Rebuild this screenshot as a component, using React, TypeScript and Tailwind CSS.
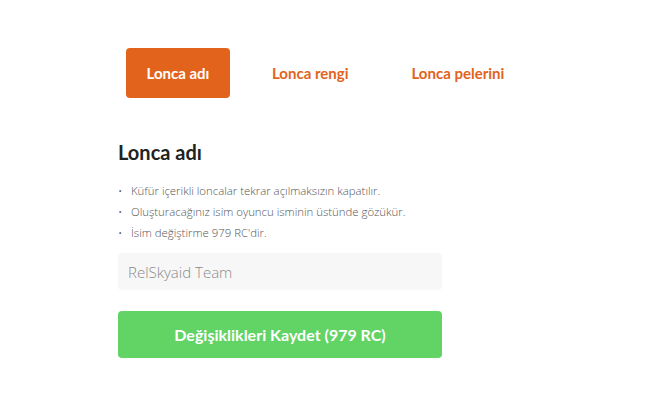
import React from "react";

export default function App() {
  const bullets = [
    "Küfür içerikli loncalar tekrar açılmaksızın kapatılır.",
    "Oluşturacağınız isim oyuncu isminin üstünde gözükür.",
    "İsim değiştirme 979 RC'dir.",
  ];
  return (
    <div className="min-h-[412px] w-full bg-white pl-[118px] pt-[48px] font-['Lato',sans-serif]">
      <div className="ml-2 flex gap-[21px]">
        <button className="h-[50px] rounded-[4px] bg-[#e2631c] px-[20.5px] text-[15px] font-bold text-white">
          Lonca adı
        </button>
        <button className="h-[50px] rounded-[4px] px-[21px] text-[15px] font-bold text-[#e2631c]">
          Lonca rengi
        </button>
        <button className="h-[50px] rounded-[4px] px-[21px] text-[15px] font-bold text-[#e2631c]">
          Lonca pelerini
        </button>
      </div>
      <div className="w-[324px]">
        <h2 className="mt-[40px] text-[20px] font-bold leading-[28px] text-[#222]">Lonca adı</h2>
        <ul className="mt-[14px] font-['Open_Sans',sans-serif]">
          {bullets.map((b) => (
            <li key={b} className="flex h-[21px] items-center text-[11.4px] font-light text-[#555]">
              <span className="w-[13px] text-[#555]">•</span>
              <span>{b}</span>
            </li>
          ))}
        </ul>
        <input
          className="mt-[10px] h-[37px] w-full rounded-[4px] bg-[#f7f7f7] px-[10px] font-['Open_Sans',sans-serif] text-[15px] font-light text-[#444] outline-none placeholder:text-[#8a8a8a]"
          placeholder="RelSkyaid Team"
        />
        <button className="mt-[21px] h-[47px] w-full rounded-[4px] bg-[#62d365] text-[16px] font-bold text-white">
          Değişiklikleri Kaydet (979 RC)
        </button>
      </div>
    </div>
  );
}
